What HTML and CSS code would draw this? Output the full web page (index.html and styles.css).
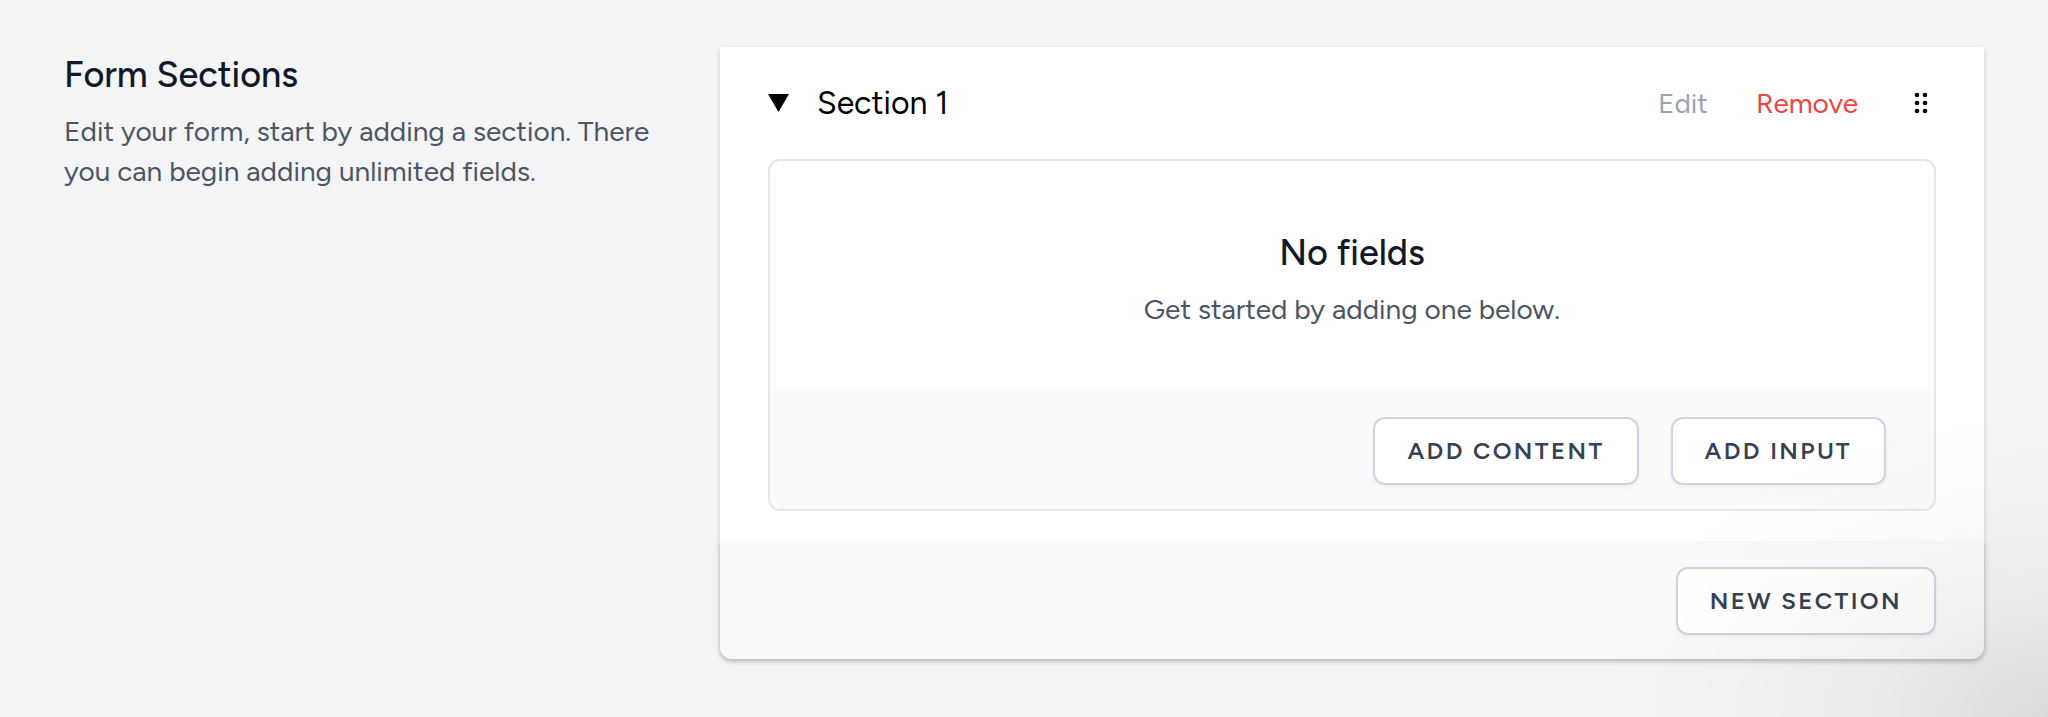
FILE: index.html
```html
<!DOCTYPE html>
<html lang="en">
<head>
<meta charset="utf-8">
<meta name="viewport" content="width=device-width, initial-scale=1">
<title>Form Sections</title>
<link rel="stylesheet" href="styles.css">
</head>
<body>
<main class="page">
  <header class="intro">
    <h2 class="heading">Form Sections</h2>
    <p class="text">Edit your form, start by adding a section. There you can begin adding unlimited fields.</p>
  </header>
  <section class="card">
    <div class="card-body">
      <div class="section-head">
        <button class="toggle" type="button" aria-expanded="true">
          <svg class="triangle" viewBox="0 0 21 18" aria-hidden="true"><path d="M0 0h21L10.500 18z"/></svg>
          <span>Section 1</span>
        </button>
        <div class="actions">
          <button class="action" type="button">Edit</button>
          <button class="action danger" type="button">Remove</button>
          <button class="handle" type="button" aria-label="Reorder section">
            <svg class="dots" viewBox="0 0 30 30" aria-hidden="true"><circle cx="11" cy="7" r="2.300"/><circle cx="19" cy="7" r="2.300"/><circle cx="11" cy="15" r="2.300"/><circle cx="19" cy="15" r="2.300"/><circle cx="11" cy="23" r="2.300"/><circle cx="19" cy="23" r="2.300"/></svg>
          </button>
        </div>
      </div>
      <div class="fields">
        <div class="empty">
          <h3 class="heading">No fields</h3>
          <p class="text">Get started by adding one below.</p>
        </div>
        <div class="bar">
          <button class="button" type="button">Add content</button>
          <button class="button" type="button">Add input</button>
        </div>
      </div>
    </div>
    <div class="bar bar-card">
      <button class="button" type="button">New section</button>
    </div>
  </section>
</main>
</body>
</html>
```
FILE: styles.css
```css
* { box-sizing: border-box; }
body {
  margin: 0;
  min-height: 100vh;
  background: #f3f4f6;
  color: #000;
  font-family: Figtree, "Noto Sans", sans-serif;
}
body::after {
  content: "";
  position: fixed;
  inset: 0;
  pointer-events: none;
  background: radial-gradient(ellipse 460px 310px at 100% 100%, rgba(0, 0, 0, 0.1), rgba(0, 0, 0, 0.04) 36%, rgba(0, 0, 0, 0.01) 70%, transparent);
}
button { font: inherit; color: inherit; background: none; border: 0; padding: 0; cursor: pointer; }
.page {
  display: grid;
  grid-template-columns: repeat(3, minmax(0, 1fr));
  column-gap: 48px;
  align-items: start;
  padding: 47px 64px 58px;
}
.heading { margin: 0; font-size: 36px; line-height: 56px; font-weight: 500; color: #111827; }
.text { margin: 8px 0 0; font-size: 28px; line-height: 40px; color: #4b5563; }
.card {
  grid-column: span 2;
  border-radius: 0 0 12px 12px;
  box-shadow: 0 2px 6px rgba(0, 0, 0, 0.1), 0 2px 4px rgba(0, 0, 0, 0.06);
}
.card-body { padding: 32px 48px 30px; background: #fff; }
.section-head { display: flex; align-items: center; justify-content: space-between; height: 48px; }
.toggle { display: flex; align-items: center; gap: 28px; font-size: 32px; line-height: 48px; }
.triangle { width: 21px; height: 18px; }
.actions { display: flex; align-items: center; gap: 48px; }
.action { font-size: 28px; line-height: 40px; color: #9ca3af; }
.danger { color: #ef4444; }
.handle { display: flex; }
.dots { width: 30px; height: 30px; }
.fields { margin-top: 32px; border: 2px solid #e5e7eb; border-radius: 12px; overflow: hidden; }
.empty { padding: 64px 48px 62px; text-align: center; }
.bar { display: flex; justify-content: flex-end; gap: 32px; padding: 26px 48px 24px; background: #f9fafb; }
.bar-card {
  border-radius: 0 0 12px 12px;
  box-shadow: 0 2px 6px rgba(0, 0, 0, 0.1), 0 2px 4px rgba(0, 0, 0, 0.06);
  clip-path: inset(0 -12px -12px -12px);
}
.button {
  padding: 16px 32px;
  border: 2px solid #d1d5db;
  border-radius: 12px;
  background: #fff;
  box-shadow: 0 2px 4px rgba(0, 0, 0, 0.05);
  color: #374151;
  font-size: 24px;
  line-height: 32px;
  font-weight: 600;
  letter-spacing: 0.1em;
  text-transform: uppercase;
}
```
